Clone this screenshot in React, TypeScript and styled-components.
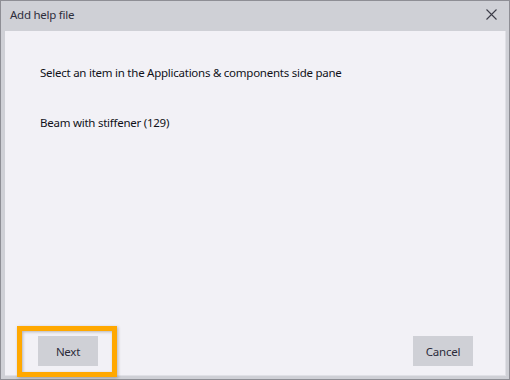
import React from 'react'
import styled, { createGlobalStyle } from 'styled-components'

const GlobalStyle = createGlobalStyle`
  html, body {
    margin: 0;
    padding: 0;
    background: #cfd0d6;
  }
  body {
    font-family: 'Segoe UI', 'Noto Sans', 'Liberation Sans', sans-serif;
    font-size: 11.5px;
    letter-spacing: -0.25px;
  }
`

export default function App(): JSX.Element {
  return (
    <>
      <GlobalStyle />
      <Window>
        <TitleBar>
          <Title>Add help file</Title>
          <CloseButton aria-label="Close">
            <svg width="11" height="11" viewBox="0 0 11 11">
              <path
                d="M0.5 0.5 L10.5 10.5 M10.5 0.5 L0.5 10.5"
                stroke="#3c3c48"
                strokeWidth="1.1"
                fill="none"
              />
            </svg>
          </CloseButton>
        </TitleBar>

        <Content>
          <Body>
            <Text>Select an item in the Applications &amp; components side pane</Text>
            <Text>Beam with stiffener (129)</Text>
          </Body>

          <Footer>
            <Button>Next</Button>
            <Button>Cancel</Button>
          </Footer>
        </Content>

        <Highlight />
      </Window>
    </>
  )
}

const Window = styled.div`
  position: relative;
  box-sizing: border-box;
  width: 510px;
  height: 380px;
  display: flex;
  flex-direction: column;
  background: #cfd0d6;
  border: 1px solid #8e8e95;
  padding: 0 3px 3px 4px;
`
const TitleBar = styled.div`
  height: 30px;
  display: flex;
  align-items: center;
  justify-content: space-between;
  padding: 0 4px 0 5px;
`
const Title = styled.div`
  color: #2e2e3c;
  margin-top: -3px;
`
const CloseButton = styled.button`
  width: 22px;
  height: 22px;
  border: none;
  background: transparent;
  padding: 0;
  display: flex;
  align-items: center;
  justify-content: center;
  margin-top: -3px;
`
const Content = styled.div`
  flex: 1;
  display: flex;
  flex-direction: column;
  justify-content: space-between;
  background: #f2f1f6;
  box-shadow: inset -1px -1px 0 #e0e0e6;
  padding: 0 33px 10px 33px;
`
const Body = styled.div`
  display: flex;
  flex-direction: column;
  gap: 34px;
  padding: 34px 0 0 2px;
`
const Text = styled.div`
  line-height: 16px;
  color: #111118;
`
const Footer = styled.div`
  display: flex;
  justify-content: space-between;
  align-items: center;
`
const Button = styled.button`
  width: 60px;
  height: 30px;
  border: none;
  background: #cfd0d6;
  color: #2b2b3a;
  font-family: inherit;
  font-size: inherit;
  letter-spacing: inherit;
  padding: 0;
`
const Highlight = styled.div`
  position: absolute;
  left: 16px;
  top: 325px;
  width: 100px;
  height: 51px;
  box-sizing: border-box;
  border: 5px solid #ffa800;
  box-shadow: 1px 1px 3px rgba(0, 0, 0, 0.25), inset 1px 1px 3px rgba(0, 0, 0, 0.25);
  pointer-events: none;
`
